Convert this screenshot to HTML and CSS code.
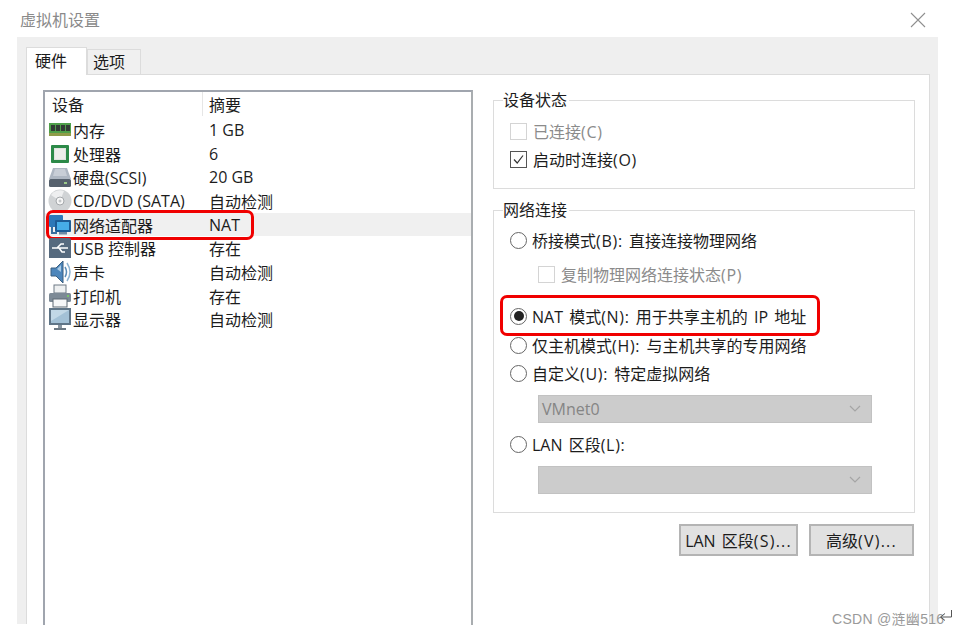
FILE: index.html
```html
<!DOCTYPE html>
<html lang="zh-CN">
<head>
    <meta charset="UTF-8">
    <meta name="viewport" content="width=device-width, initial-scale=1.0">
    <title>虚拟机设置</title>
    <link rel="stylesheet" href="styles.css">
</head>
<body>

    <div class="titlebar">
        <span class="title">虚拟机设置</span>
        <svg class="close" width="16" height="16" viewBox="0 0 16 16"><path d="M1 1 L15 15 M15 1 L1 15" stroke="#8f8f8f" stroke-width="1.1" fill="none"/></svg>
    </div>

    <div class="dialog">
        <div class="tabs">
            <div class="tab active">硬件</div>
            <div class="tab">选项</div>
        </div>

        <div class="panel">
            <div class="devices">
                <div class="dev-head">
                    <div class="col-name">设备</div>
                    <div class="col-sum">摘要</div>
                </div>

                <div class="dev-row">
                    <div class="col-name">
                        <svg class="ico" viewBox="0 0 24 22"><rect x="1" y="4" width="22" height="13" fill="#4f9f4a"/><rect x="3" y="6" width="4" height="6" fill="#333b35"/><rect x="8" y="6" width="4" height="6" fill="#333b35"/><rect x="13" y="6" width="4" height="6" fill="#333b35"/><rect x="18" y="6" width="4" height="6" fill="#333b35"/><rect x="1" y="14" width="22" height="3" fill="#8f9c4a"/></svg>
                        <span>内存</span>
                    </div>
                    <div class="col-sum">1 GB</div>
                </div>
                <div class="dev-row">
                    <div class="col-name">
                        <svg class="ico" viewBox="0 0 24 22"><rect x="3" y="2" width="18" height="18" rx="1" fill="#2c8a48"/><rect x="6" y="5" width="12" height="12" fill="#dfe3df"/><rect x="7" y="6" width="10" height="10" fill="#eceeea"/></svg>
                        <span>处理器</span>
                    </div>
                    <div class="col-sum">6</div>
                </div>
                <div class="dev-row">
                    <div class="col-name">
                        <svg class="ico" viewBox="0 0 24 22"><path d="M5 2 H19 L23 13 H1 Z" fill="#aeb7c2"/><path d="M7 3 H17 L19 10 H5 Z" fill="#c8ced6"/><rect x="1" y="13" width="22" height="8" rx="1.500" fill="#56616d"/><rect x="16" y="16" width="3" height="2" fill="#9ccb8a"/></svg>
                        <span>硬盘(SCSI)</span>
                    </div>
                    <div class="col-sum">20 GB</div>
                </div>
                <div class="dev-row">
                    <div class="col-name">
                        <svg class="ico" viewBox="0 0 24 24"><circle cx="12" cy="12" r="11.500" fill="#d0d3d5"/><path d="M12 12 L3 6 A11 11 0 0 1 16 2 Z" fill="#eeeff0"/><circle cx="12" cy="12" r="4" fill="#f7f7f7" stroke="#a4a8ab"/><circle cx="12" cy="12" r="1.500" fill="#c4c7c9"/></svg>
                        <span>CD/DVD (SATA)</span>
                    </div>
                    <div class="col-sum">自动检测</div>
                </div>
                <div class="dev-row selected">
                    <div class="col-name">
                        <svg class="ico" viewBox="0 0 24 22"><rect x="1" y="1" width="14" height="12" rx="1" fill="#2d78b8"/><path d="M4 13 V19 H9" stroke="#3a6f9e" stroke-width="2" fill="none"/><rect x="7" y="6" width="16" height="12" rx="1" fill="#1d5c96"/><rect x="9" y="8" width="12" height="8" fill="#46ade8"/><rect x="11" y="18" width="8" height="2.500" fill="#6d8ba5"/></svg>
                        <span>网络适配器</span>
                    </div>
                    <div class="col-sum">NAT</div>
                    <div class="ring ring-net"></div>
                </div>
                <div class="dev-row">
                    <div class="col-name">
                        <svg class="ico" viewBox="0 0 24 22"><path d="M1 3 Q1 1 3 1 H21 Q23 1 23 3 V21 H1 Z" fill="#566a7e"/><path d="M4 11 H20 M9 11 L13 7 H16 M11 11 L14 15 H17" stroke="#fff" stroke-width="1.500" fill="none"/></svg>
                        <span>USB 控制器</span>
                    </div>
                    <div class="col-sum">存在</div>
                </div>
                <div class="dev-row">
                    <div class="col-name">
                        <svg class="ico" viewBox="0 0 24 24"><path d="M3 8 H8 L15 1 V23 L8 16 H3 Z" fill="#4d86bb" stroke="#3a5f80"/><path d="M9 9 L13 5 V12 Z" fill="#a9cbe6"/><path d="M17 7 Q20 12 17 17" stroke="#5b8db8" stroke-width="1.500" fill="none"/><path d="M19 3 Q25 12 19 21" stroke="#8fb4d2" stroke-width="1.500" fill="none"/></svg>
                        <span>声卡</span>
                    </div>
                    <div class="col-sum">自动检测</div>
                </div>
                <div class="dev-row">
                    <div class="col-name">
                        <svg class="ico" viewBox="0 0 24 24"><rect x="6" y="1" width="12" height="8" fill="#eef0f1" stroke="#6f7a85"/><rect x="1" y="9" width="22" height="9" rx="1.500" fill="#7d8a96"/><rect x="5" y="15" width="14" height="8" fill="#f6f7f8" stroke="#5f6a74"/><rect x="19" y="11" width="2" height="2" fill="#7ac36a"/></svg>
                        <span>打印机</span>
                    </div>
                    <div class="col-sum">存在</div>
                </div>
                <div class="dev-row">
                    <div class="col-name">
                        <svg class="ico" viewBox="0 0 24 24"><rect x="1" y="1" width="22" height="17" fill="#5f7587"/><rect x="3" y="3" width="18" height="13" fill="#a3c1d6"/><path d="M3 3 H21 L3 14 Z" fill="#c2d8e6"/><rect x="10" y="18" width="4" height="3" fill="#8a97a2"/><rect x="6" y="21" width="12" height="2" fill="#6b7883"/></svg>
                        <span>显示器</span>
                    </div>
                    <div class="col-sum">自动检测</div>
                </div>
            </div>

            <div class="side">
                <fieldset class="group state">
                    <legend>设备状态</legend>
                    <div class="opt disabled"><span class="chk"></span><span>已连接<span class="key">(C)</span></span></div>
                    <div class="opt">
                        <span class="chk on"><svg width="13" height="13" viewBox="0 0 13 13"><path d="M2 6.500 L5.200 10 L11 2.500" stroke="#333" stroke-width="1.200" fill="none"/></svg></span>
                        <span>启动时连接<span class="key">(O)</span></span>
                    </div>
                </fieldset>

                <fieldset class="group net">
                    <legend>网络连接</legend>
                    <div class="opt"><span class="radio"></span><span>桥接模式<span class="key">(B):</span> 直接连接物理网络</span></div>
                    <div class="opt sub disabled"><span class="chk"></span><span>复制物理网络连接状态<span class="key">(P)</span></span></div>
                    <div class="opt nat">
                        <span class="radio on"></span>
                        <span>NAT 模式<span class="key">(N):</span> 用于共享主机的 IP 地址</span>
                        <div class="ring ring-nat"></div>
                    </div>
                    <div class="opt gap1"><span class="radio"></span><span>仅主机模式<span class="key">(H):</span> 与主机共享的专用网络</span></div>
                    <div class="opt"><span class="radio"></span><span>自定义<span class="key">(U):</span> 特定虚拟网络</span></div>
                    <div class="combo">VMnet0<svg width="14" height="8" viewBox="0 0 14 8"><path d="M2 1 L7 6 L12 1" stroke="#a5a5a5" stroke-width="1.200" fill="none"/></svg></div>
                    <div class="opt lan"><span class="radio"></span><span>LAN 区段<span class="key">(L):</span></span></div>
                    <div class="combo"><svg width="14" height="8" viewBox="0 0 14 8"><path d="M2 1 L7 6 L12 1" stroke="#a5a5a5" stroke-width="1.200" fill="none"/></svg></div>
                </fieldset>

                <div class="buttons">
                    <button class="btn btn-lan">LAN 区段<span class="key">(S)...</span></button>
                    <button class="btn btn-adv">高级<span class="key">(V)...</span></button>
                </div>
            </div>
        </div>
    </div>

    <div class="watermark">CSDN @涟幽516</div>
    <svg class="return-mark" width="14" height="12" viewBox="0 0 14 12"><path d="M12.500 1 V8 H2 M6 4.500 L1.500 8 L6 11.500" stroke="#555" stroke-width="1" fill="none"/></svg>

</body>
</html>
```

FILE: styles.css
```css
html, body {
    height: 635px;
    overflow: hidden;
}

body {
    background-color: white;
    font-family: "Open Sans", "Noto Sans CJK SC", sans-serif;
    font-size: 16px;
    color: #1c1c1c;
    margin: 0;
    position: relative;
}

.titlebar {
    height: 37px;
    display: flex;
    justify-content: space-between;
    align-items: center;
    padding: 0 32px 0 20px;
}

.title {
    color: #8a8a8a;
}

.close {
    margin-top: 3px;
}

.dialog {
    background-color: #efefef;
    margin-left: 17px;
    width: 921px;
    height: 587px;
    padding: 10px 8px 0 9px;
    box-sizing: border-box;
}

.tabs {
    display: flex;
    align-items: flex-end;
    height: 27px;
}

.tab {
    width: 54px;
    height: 25px;
    line-height: 25px;
    padding-left: 5px;
    box-sizing: border-box;
    border: 1px solid #dcdcdc;
    border-bottom: none;
    background-color: #f0f0f0;
}

.tab.active {
    width: 61px;
    height: 28px;
    line-height: 26px;
    padding-left: 8px;
    background-color: white;
    position: relative;
    top: 1px;
}

.panel {
    background-color: white;
    border: 1px solid #dcdcdc;
    border-bottom: none;
    height: 550px;
    box-sizing: border-box;
    display: flex;
    padding: 15px 0 0 16px;
    gap: 20px;
}

.devices {
    width: 430px;
    height: 535px;
    box-sizing: border-box;
    border: 2px solid #a0a5ae;
    border-bottom: none;
    border-right-color: #a9adb0;
}

.dev-head, .dev-row {
    display: flex;
    position: relative;
    align-items: center;
}

.dev-head {
    height: 24px;
    margin-bottom: 2px;
}

.dev-row {
    height: 23.7px;
}

.dev-row.selected {
    background-color: #f0f0f0;
}

.col-name {
    width: 158px;
    display: flex;
    align-items: center;
    box-sizing: border-box;
    padding-left: 3px;
}

.dev-head .col-name {
    padding-left: 7px;
    height: 24px;
    border-right: 1px solid #e6e6e6;
}

.col-sum {
    padding-left: 6px;
}

.ico {
    width: 24px;
    height: 24px;
    margin-right: 1px;
    flex-shrink: 0;
}

.ring {
    position: absolute;
    border: 3px solid #f00000;
    border-radius: 7px;
    box-sizing: border-box;
}

.ring-net {
    left: 1px;
    top: -3px;
    width: 208px;
    height: 30px;
}

.ring-nat {
    left: -10px;
    top: -7px;
    width: 320px;
    height: 41px;
}

.side {
    width: 422px;
}

.group {
    margin: 0;
    padding: 0 16px 0 16px;
    border: 1px solid #dcdcdc;
}

.group legend {
    margin-left: -7px;
    padding: 0 2px 0 0;
    line-height: 20px;
}

.state {
    height: 99px;
    box-sizing: border-box;
    padding-top: 7px;
}

.net {
    margin-top: 11px;
    height: 313px;
    box-sizing: border-box;
    padding-top: 6px;
}

.opt {
    height: 28px;
    display: flex;
    align-items: center;
    position: relative;
    word-spacing: 2px;
}

.key {
    letter-spacing: 0.7px;
}

.gap1 {
    margin-top: 1px;
}

.sub {
    margin: 6px 0 0 28px;
}

.nat {
    margin-top: 14px;
}

.lan {
    margin-top: 7px;
}

.disabled {
    color: #8b8b8b;
}

.chk, .radio {
    width: 17px;
    height: 17px;
    box-sizing: border-box;
    margin-right: 6px;
    display: flex;
    align-items: center;
    justify-content: center;
    flex-shrink: 0;
}

.chk {
    border: 1px solid #d4d4d4;
}

.chk.on {
    border-color: #555;
}

.radio {
    border: 1.5px solid #666;
    border-radius: 50%;
    margin-right: 5px;
}

.radio.on::before {
    content: "";
    width: 10px;
    height: 10px;
    border-radius: 50%;
    background-color: #222;
}

.combo {
    height: 28px;
    width: 334px;
    margin: 8px 0 0 28px;
    box-sizing: border-box;
    background-color: #cccccc;
    border: 1px solid #c2c2c2;
    color: #858585;
    padding: 0 9px 0 3px;
    display: flex;
    align-items: center;
}

.combo svg {
    margin-left: auto;
}

.buttons {
    display: flex;
    justify-content: flex-end;
    gap: 11px;
    margin: 11px 1px 0 0;
}

.btn {
    font: inherit;
    color: #1c1c1c;
    height: 32px;
    padding: 0;
    background-color: #e1e1e1;
    border: 2px solid #b4b4b4;
    box-sizing: border-box;
    word-spacing: 2px;
}

.btn .key {
    letter-spacing: 1.2px;
}

.btn-lan {
    width: 119px;
}

.btn-adv {
    width: 105px;
}

.watermark {
    position: absolute;
    left: 832px;
    top: 608px;
    color: #9a9a9a;
    font-family: "Liberation Sans", "Noto Sans CJK SC", sans-serif;
    font-size: 14px;
    letter-spacing: 0.3px;
}

.return-mark {
    position: absolute;
    left: 939px;
    top: 609px;
}
```
